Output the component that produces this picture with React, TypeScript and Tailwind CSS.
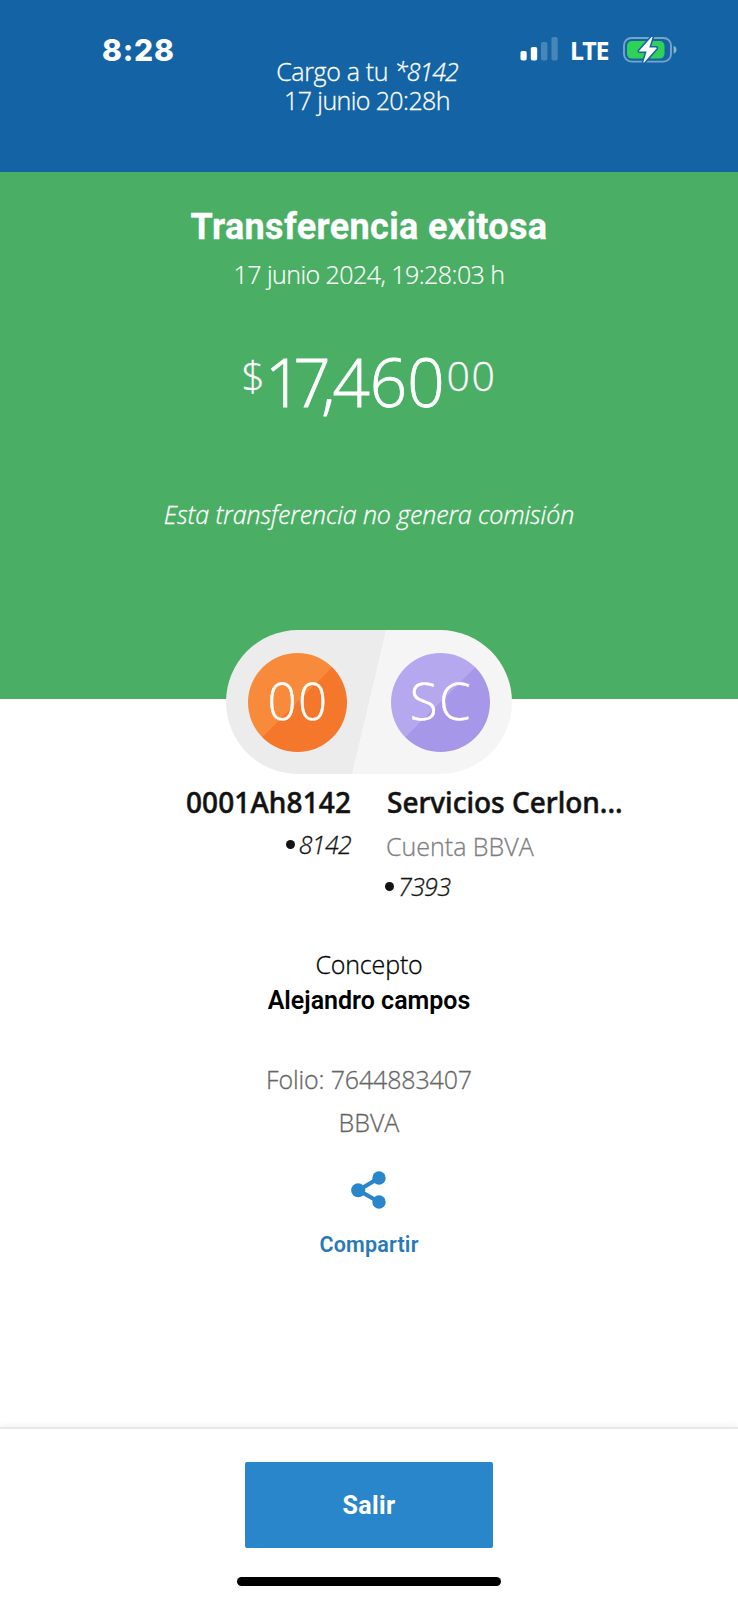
function Signal() {
  return (
    <svg width="38" height="24" viewBox="0 0 38 24" fill="#fff">
      <rect x="0.5" y="14" width="6.2" height="9.5" rx="1.8" />
      <rect x="10.8" y="10" width="6.4" height="13.5" rx="1.8" />
      <rect x="21" y="5" width="6.4" height="18.5" rx="1.8" opacity="0.22" />
      <rect x="31.5" y="0" width="6.2" height="23.5" rx="1.8" opacity="0.22" />
    </svg>
  );
}

function Battery() {
  return (
    <svg width="54" height="26" viewBox="0 0 54 26">
      <rect x="1" y="1" width="47" height="23.6" rx="7.5" fill="none" stroke="#fff" strokeOpacity="0.42" strokeWidth="1.9" />
      <path d="M50.6 8.8c1.9.7 2.9 2.2 2.9 4s-1 3.3-2.9 4z" fill="#fff" fillOpacity="0.5" />
      <rect x="4" y="4" width="37.5" height="17.6" rx="4.8" fill="#30d158" />
      <path
        d="M28.8-.3 16.2 13.7q-.6.9.4.9h7l-3.2 10.4q-.1 1 .7.5L33.6 11.5q.5-.9-.5-.9h-6.8L29.6.1q.1-.9-.8-.4z"
        fill="#fff"
        stroke="#1464a5"
        strokeWidth="3"
        strokeLinejoin="round"
        paintOrder="stroke"
      />
    </svg>
  );
}

function Header() {
  return (
    <header className="grid h-[172px] grid-cols-[276px_182px_280px] bg-[#1464a5] text-white">
      <div className="pt-[35px] pl-[102px] font-['Inter',sans-serif] text-[30px] leading-[30px] font-extrabold tracking-[0.8px]">8:28</div>
      <div className="pt-[57px] text-center text-[25px] leading-[29px] font-light whitespace-nowrap [-webkit-text-stroke:0.3px]">
        <p className="tracking-[-0.35px]">
          Cargo a tu <em className="tracking-[-1px]">*8142</em>
        </p>
        <p className="tracking-[-0.6px]">17 junio 20:28h</p>
      </div>
      <div className="flex items-start pt-[37px] pl-[62px]">
        <Signal />
        <span className="mt-[1px] ml-[12px] w-[39px] font-['Noto_Sans',sans-serif] text-[25px] leading-[25px] font-bold tracking-[-1.2px]">LTE</span>
        <span className="ml-[14px]">
          <Battery />
        </span>
      </div>
    </header>
  );
}

function Summary() {
  return (
    <section className="flex h-[527px] flex-col items-center bg-[#4aae64] pt-[35px] text-white [-webkit-text-stroke:0.3px]">
      <h1 className="font-['Roboto',sans-serif] text-[36px] leading-[40px] font-bold tracking-[0.35px]">Transferencia exitosa</h1>
      <p className="mt-[12px] text-[25px] leading-[30px] font-light tracking-[-0.55px] [-webkit-text-stroke:0.2px]">17 junio 2024, 19:28:03 h</p>
      <div className="mt-[60px] flex items-start font-light">
        <span className="mt-[6px] text-[41px] leading-[41px]">$</span>
        <span className="text-[65.5px] leading-[66px] [-webkit-text-stroke:0.8px]">
          <span className="tracking-[-9.2px]">17</span>
          <span className="tracking-[-3px]">,</span>460
        </span>
        <span className="mt-[6px] ml-[2px] text-[41px] leading-[41px] tracking-[1.5px]">00</span>
      </div>
      <p className="mt-[84px] text-[25px] leading-[30px] font-light tracking-[-0.1px] italic">Esta transferencia no genera comisión</p>
    </section>
  );
}

function Parties() {
  return (
    <>
      <div className="relative mx-auto -mt-[69px] flex h-[144px] w-[286px] items-center justify-between rounded-full bg-[linear-gradient(103.3deg,#ececec_50%,#f5f5f5_50%)] px-[22px] text-[51px] leading-[60px] font-light text-white [-webkit-text-stroke:0.5px]">
        <span className="flex size-[99px] items-center justify-center rounded-full bg-[linear-gradient(135deg,#f78b3b_50%,#f5772c_50%)] pb-[4px] pl-[1px] tracking-[1.5px]">00</span>
        <span className="flex size-[99px] items-center justify-center rounded-full bg-[linear-gradient(135deg,#b6a8ee_50%,#a697e8_50%)] pb-[4px] pl-[1px] tracking-[1.5px]">SC</span>
      </div>
      <div className="mt-[11px] grid grid-cols-2 gap-9 text-[25px] leading-[30px] font-light [-webkit-text-stroke:0.3px]">
        <div className="flex flex-col items-end">
          <h2 className="font-['Noto_Sans',sans-serif] text-[28px] leading-[34px] font-medium tracking-[0.1px] text-[#121212] [-webkit-text-stroke:0.5px]">0001Ah8142</h2>
          <p className="mt-[10px] flex items-center gap-[4px] tracking-[-0.7px] text-[#121212] italic">
            <span className="size-[9px] rounded-full bg-[#121212]" />
            8142
          </p>
        </div>
        <div className="flex flex-col items-start">
          <h2 className="font-['Noto_Sans',sans-serif] text-[28px] leading-[34px] font-medium text-[#121212] [-webkit-text-stroke:0.5px]">Servicios Cerlon...</h2>
          <p className="mt-[12px] -ml-px text-[#808080]">Cuenta BBVA</p>
          <p className="mt-[10px] -ml-[2px] flex items-center gap-[4px] tracking-[-0.7px] text-[#121212] italic">
            <span className="size-[9px] rounded-full bg-[#121212]" />
            7393
          </p>
        </div>
      </div>
    </>
  );
}

function Details() {
  return (
    <section className="mt-[48px] flex flex-col items-center text-[25px] leading-[30px] [-webkit-text-stroke:0.3px]">
      <p className="font-light tracking-[-0.15px]">Concepto</p>
      <p className="mt-[7px] font-['Roboto',sans-serif] font-semibold [-webkit-text-stroke:0px]">Alejandro campos</p>
      <p className="mt-[48px] font-light tracking-[-0.15px] text-[#666666]">Folio: 7644883407</p>
      <p className="mt-[13px] font-light text-[#666666]">BBVA</p>
      <button className="mt-[34px] flex flex-col items-center text-[#2779ba] [-webkit-text-stroke:0px]">
        <svg width="36" height="38" viewBox="0 0 36 38" fill="#2a86ca">
          <path d="M28 7 7.5 19.3 28 31" fill="none" stroke="#2a86ca" strokeWidth="4.2" />
          <circle cx="7.2" cy="19.3" r="7" />
          <circle cx="28" cy="7" r="6.7" />
          <circle cx="28" cy="31" r="6.7" />
        </svg>
        <span className="mt-[23px] font-['Roboto',sans-serif] text-[21.5px] leading-[26px] font-semibold tracking-[0.2px]">Compartir</span>
      </button>
    </section>
  );
}

export default function App() {
  return (
    <main className="flex h-[1600px] w-[738px] flex-col overflow-hidden bg-white font-['Open_Sans','Noto_Sans',sans-serif] text-black">
      <Header />
      <Summary />
      <Parties />
      <Details />
      <footer className="mt-auto flex h-[173px] flex-col items-center border-t-2 border-[#e8e8e8] bg-white pt-[33px] shadow-[0_-2px_6px_rgba(0,0,0,0.05)]">
        <button className="h-[86px] w-[248px] rounded-[2px] bg-[#2a86ca] pt-[2px] font-['Roboto',sans-serif] text-[25px] font-bold tracking-[0.4px] text-white">Salir</button>
        <div className="mt-[29px] h-[9px] w-[264px] rounded-full bg-black" />
      </footer>
    </main>
  );
}
